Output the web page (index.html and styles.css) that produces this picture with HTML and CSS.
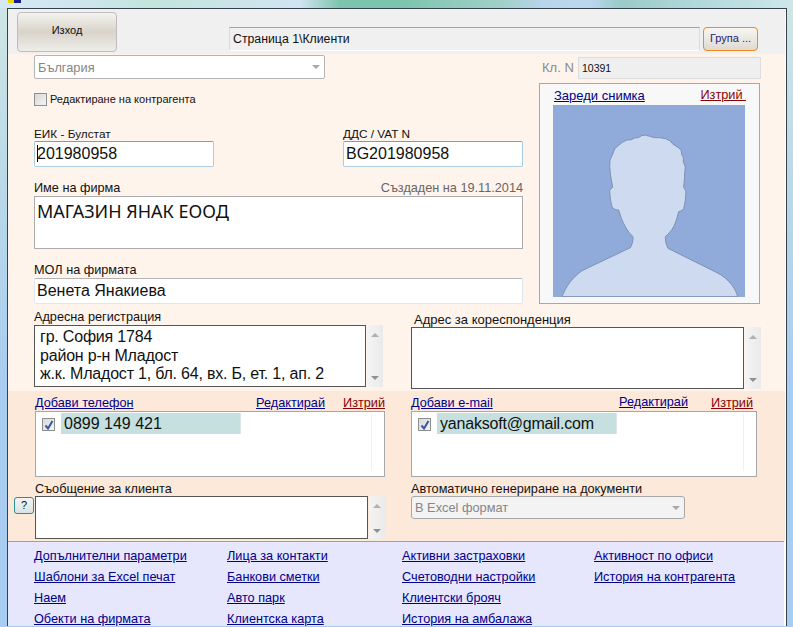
FILE: index.html
```html
<!DOCTYPE html>
<html lang="bg">
<head>
  <meta charset="UTF-8" />
  <meta name="viewport" content="width=device-width, initial-scale=1" />
  <title>Клиенти</title>
  <link rel="stylesheet" href="styles.css">
</head>
<body>
  <div class="titlebar">
    <svg class="app-icon" width="14" height="4" viewBox="0 0 14 4"><rect x="0" y="0" width="6" height="3" fill="#e8d800"/><rect x="6" y="0" width="7" height="3" fill="#1a1a90"/></svg>
  </div>

  <div class="window">
    <div class="toolbar">
      <div class="exit-btn">Изход</div>
      <div class="path-box">Страница 1\Клиенти</div>
      <div class="group-btn">Група ...</div>
    </div>

    <div class="main">
      <div class="main-top">
        <div class="left-col">
          <div class="select country">
            <span>България</span>
            <i class="arrow"></i>
          </div>
          <div class="check-row">
            <span class="checkbox"></span>
            <span>Редактиране на контрагента</span>
          </div>

          <div class="two-fields">
            <div class="short-field">
              <div class="label">ЕИК - Булстат</div>
              <div class="input"><span class="caret"></span>201980958</div>
            </div>
            <div class="short-field">
              <div class="label">ДДС / VAT N</div>
              <div class="input">BG201980958</div>
            </div>
          </div>

          <div class="label-row firm-label">
            <div class="label">Име на фирма</div>
            <div class="created">Създаден на 19.11.2014</div>
          </div>
          <div class="firm-box">МАГАЗИН ЯНАК ЕООД</div>

          <div class="label mol-label">МОЛ на фирмата</div>
          <div class="input mol">Венета Янакиева</div>
        </div>

        <div class="right-col">
          <div class="client-no">
            <span class="client-label">Кл. N</span>
            <div class="client-box">10391</div>
          </div>
          <div class="photo-box">
            <div class="photo-links">
              <a class="link">Зареди снимка</a>
              <a class="link red">Изтрий&nbsp;</a>
            </div>
            <svg class="photo" width="192" height="192" viewBox="0 0 576 576">
              <rect width="576" height="576" fill="#90abda"/>
              <path fill="#cddaf0" stroke="#7d91b6" stroke-width="3" stroke-linejoin="round" d="M277 90 L290 94 L305 98 L320 98 L338 101 L352 108 L358 116 L367 122 L373 126 L384 134 L386 148 L391 158 L391 170 L397 186 L395 205 L394 225 L392 247 L399 258 C398 280 396 296 392 310 C388 318 382 318 377 320 C372 340 368 352 362 365 C355 378 345 388 337 395 C337 410 340 420 345 430 L492 503 C510 512 525 525 537 540 C545 552 551 563 554 575 L27 575 C32 562 40 545 52 530 C62 518 75 505 87 497 L232 428 C238 418 241 405 240 395 C232 388 224 378 217 365 C208 350 202 332 197 315 C188 315 180 312 177 305 C173 290 170 270 170 255 L179 247 L175 225 L172 205 L170 185 L171 165 L178 150 L185 132 L195 122 L208 112 L222 105 L236 104 L244 99 L256 98 L266 92 Z"/>
            </svg>
          </div>
        </div>
      </div>

      <div class="addresses">
        <div class="address reg">
          <div class="label">Адресна регистрация</div>
          <div class="area-row">
            <div class="area">гр. София 1784<br>район р-н Младост<br>ж.к. Младост 1, бл. 64, вх. Б, ет. 1, ап. 2</div>
            <div class="scrollbar"><i class="up"></i><i class="down"></i></div>
          </div>
        </div>
        <div class="address corr">
          <div class="label">Адрес за кореспонденция</div>
          <div class="area-row">
            <div class="area"></div>
            <div class="scrollbar"><i class="up"></i><i class="down"></i></div>
          </div>
        </div>
      </div>
    </div>

    <div class="contacts">
      <div class="contact-col phones">
        <div class="contact-links">
          <a class="link">Добави телефон</a>
          <a class="link edit">Редактирай</a>
          <a class="link red">Изтрий</a>
        </div>
        <div class="list">
          <span class="checkbox checked"><svg width="10" height="10" viewBox="0 0 10 10"><path d="M1.5 5.5 L4 8.5 L8.5 1" fill="none" stroke="#3a54a8" stroke-width="2"/></svg></span>
          <div class="list-item">0899 149 421</div>
          <div class="list-rest"></div>
        </div>
        <div class="label msg-label">Съобщение за клиента</div>
        <div class="msg-row">
          <div class="help-btn">?</div>
          <div class="area msg"></div>
          <div class="scrollbar msg-scroll"><i class="up"></i><i class="down"></i></div>
        </div>
      </div>

      <div class="contact-col mails">
        <div class="contact-links">
          <a class="link">Добави e-mail</a>
          <a class="link edit">Редактирай</a>
          <a class="link red">Изтрий</a>
        </div>
        <div class="list">
          <span class="checkbox checked"><svg width="10" height="10" viewBox="0 0 10 10"><path d="M1.5 5.5 L4 8.5 L8.5 1" fill="none" stroke="#3a54a8" stroke-width="2"/></svg></span>
          <div class="list-item">yanaksoft@gmail.com</div>
          <div class="list-rest"></div>
        </div>
        <div class="label msg-label">Автоматично генериране на документи</div>
        <div class="select doc-select">
          <span>В Excel формат</span>
          <i class="arrow"></i>
        </div>
      </div>
    </div>

    <div class="footer">
      <a class="link">Допълнителни параметри</a>
      <a class="link">Лица за контакти</a>
      <a class="link">Активни застраховки</a>
      <a class="link">Активност по офиси</a>
      <a class="link">Шаблони за Excel печат</a>
      <a class="link">Банкови сметки</a>
      <a class="link">Счетоводни настройки</a>
      <a class="link">История на контрагента</a>
      <a class="link">Наем</a>
      <a class="link">Авто парк</a>
      <a class="link">Клиентски брояч</a>
      <span></span>
      <a class="link">Обекти на фирмата</a>
      <a class="link">Клиентска карта</a>
      <a class="link">История на амбалажа</a>
      <span></span>
    </div>
  </div>
</body>
</html>
```

FILE: styles.css
```css
html, body { height: 100%; }
body {
  margin: 0;
  height: 627px;
  overflow: hidden;
  font-family: "Liberation Sans", Arial, sans-serif;
  font-size: 12.7px;
  color: #111;
  background: linear-gradient(to bottom, #cfe6e4 0, #b8d8e8 200px, #a9cdf0 380px, #a8cdf2 627px);
}

.titlebar {
  height: 8px;
  position: relative;
  background: linear-gradient(to right, #d6e8f4 0, #cfe6f0 70px, #c4e4dc 150px, #d2e4f2 300px, #7cc4ac 340px, #7cc4ac 400px, #a0d0c8 500px, #b8d4ea 540px, #bcd6ee 590px, #9ccac8 620px, #b8dce0 720px, #cfe6ea 793px);
}
.app-icon { position: absolute; left: 8px; top: 0; }

.window {
  width: 777px;
  margin-left: 7px;
  border: 1px solid #34424e;
  border-bottom: 0;
  background: #fff;
  padding-right: 1px;
}

.toolbar {
  display: flex;
  align-items: flex-start;
  height: 45px;
  background: #f0f0f0;
}
.exit-btn {
  box-sizing: border-box;
  width: 100px;
  height: 40px;
  margin: 3px 0 0 9px;
  padding-bottom: 4px;
  border: 1px solid #bdbdbd;
  border-radius: 4px;
  background: linear-gradient(to bottom, #f5f3ef 0, #d8d4ca 50%, #efedea 100%);
  display: flex;
  align-items: center;
  justify-content: center;
  font-size: 11px;
}
.path-box {
  width: 466px;
  height: 22px;
  margin: 18px 0 0 112px;
  padding-left: 3px;
  border-top: 1px solid #a0a0a0;
  border-left: 1px solid #dcdcdc;
  border-right: 1px solid #dcdcdc;
  border-bottom: 1px solid #fff;
  line-height: 22px;
  font-size: 12.3px;
}
.group-btn {
  width: 53px;
  height: 22px;
  margin: 18px 0 0 3px;
  border: 1px solid #f08a1d;
  border-radius: 4px;
  background: linear-gradient(to bottom, #f8f6f2, #dedad2);
  text-align: center;
  line-height: 21px;
  font-size: 11px;
  color: #1c1c78;
}

.main {
  height: 337px;
  background: #fff4ec;
}
.main-top { display: flex; padding-left: 26px; }
.left-col { width: 489px; padding-top: 1px; }
.right-col { width: 222px; margin-left: 16px; }

.label { height: 14px; line-height: 14px; }

.select {
  display: flex;
  align-items: center;
  justify-content: space-between;
  box-sizing: border-box;
  border: 1px solid #b4b4b4;
  border-radius: 2px;
  background: #fff;
  color: #868686;
  padding: 0 4px 0 3px;
  font-size: 12.8px;
}
.country { width: 291px; height: 24px; }
.arrow {
  border-left: 4px solid transparent;
  border-right: 4px solid transparent;
  border-top: 4px solid #a8a8a8;
}

.check-row {
  display: flex;
  align-items: center;
  height: 14px;
  margin-top: 13px;
  gap: 3px;
  font-size: 11px;
}
.checkbox {
  display: flex;
  align-items: center;
  justify-content: center;
  box-sizing: border-box;
  width: 13px;
  height: 13px;
  flex: none;
  border: 1px solid #8e8f8f;
  background: linear-gradient(135deg, #d8d8d8, #f4f4f4);
}

.two-fields {
  display: flex;
  justify-content: space-between;
  margin-top: 21px;
}
.short-field { width: 180px; }
.short-field .label { font-size: 11.8px; }
.input {
  box-sizing: border-box;
  height: 26px;
  border: 1px solid #a9cde4;
  border-top-color: #7d9db5;
  border-radius: 2px;
  background: #fff;
  padding-left: 2px;
  line-height: 23px;
  font-size: 16px;
}
.caret {
  display: inline-block;
  width: 0;
  height: 17px;
  margin-right: -1px;
  border-left: 1px solid #000;
  vertical-align: -3px;
}

.label-row {
  display: flex;
  justify-content: space-between;
}
.firm-label { margin-top: 14px; }
.created { color: #666; }
.firm-box {
  box-sizing: border-box;
  height: 53px;
  margin-top: 1px;
  border: 1px solid #ababab;
  background: #fff;
  padding: 2px 2px;
  font-family: "Noto Sans", sans-serif;
  font-size: 18px;
  line-height: 24px;
}
.mol-label { margin-top: 14px; }
.mol {
  margin-top: 1px;
  border: 1px solid #e0e6ee;
  border-top-color: #b4b4b4;
}

.client-no {
  display: flex;
  align-items: center;
  height: 23px;
  margin-top: 2px;
  padding-left: 3px;
}
.client-label { width: 36px; font-size: 13px; color: #8a8a8a; }
.client-box {
  box-sizing: border-box;
  width: 183px;
  height: 22px;
  border: 1px solid #dcdcdc;
  background: #efefef;
  padding-left: 3px;
  line-height: 21px;
  font-size: 10.5px;
}
.photo-box {
  box-sizing: border-box;
  width: 221px;
  height: 221px;
  margin-top: 4px;
  border: 1px solid #a8a8a8;
  background: #f8f8f8;
  padding: 4px 0 0 13px;
}
.photo-links {
  display: flex;
  justify-content: space-between;
  width: 192px;
  height: 17px;
  padding-left: 1px;
  font-size: 13px;
}
.photo-links .red { font-size: 12.7px; }
.photo { display: block; }

.link { color: #00008b; text-decoration: underline; }
.link.red { color: #8b0000; }

.addresses { display: flex; padding: 6px 0 0 26px; }
.reg { width: 349px; }
.corr { margin-left: 28px; }
.corr .label { padding-left: 3px; margin-top: 3px; font-size: 13px; }
.corr .area-row { margin-top: 0; }
.area-row { display: flex; margin-top: 1px; }
.area {
  box-sizing: border-box;
  width: 333px;
  height: 62px;
  border: 1px solid #555;
  background: #fff;
  padding: 2px 5px;
  font-size: 16px;
  letter-spacing: -.2px;
  line-height: 18.5px;
}
.scrollbar {
  display: flex;
  flex-direction: column;
  justify-content: space-between;
  align-items: center;
  box-sizing: border-box;
  width: 16px;
  height: 62px;
  margin-left: 1px;
  padding: 8px 0 7px;
  background: linear-gradient(to right, #f4f4f4, #eaeaea);
}
.up {
  border-left: 4px solid transparent;
  border-right: 4px solid transparent;
  border-bottom: 4px solid #b0b0b0;
}
.down {
  border-left: 4px solid transparent;
  border-right: 4px solid transparent;
  border-top: 4px solid #909090;
}

.contacts {
  display: flex;
  height: 150px;
  box-sizing: border-box;
  padding: 5px 0 0 27px;
  background: #fde9da;
}
.contact-col { width: 350px; }
.mails { margin-left: 26px; width: 346px; }
.contact-links {
  display: flex;
  height: 15px;
  line-height: 15px;
}
.contact-links .edit { margin-left: auto; }
.contact-links .red { margin-left: 18px; }
.mails .contact-links .edit { margin-top: -1px; }
.mails .contact-links .red { margin-left: 23px; margin-right: 4px; }

.list {
  display: flex;
  box-sizing: border-box;
  height: 66px;
  border: 1px solid #a4a8ac;
  background: #fff;
  padding: 1px 0 0 6px;
  position: relative;
}
.list .checkbox { margin: 5px 6px 0 0; }
.list-item {
  width: 180px;
  height: 21px;
  background: #c5e0df;
  line-height: 21px;
  font-size: 16px;
  padding-left: 3px;
  box-sizing: border-box;
  border-right: 1px solid #dbe8e8;
}
.mails .list-item { letter-spacing: -.2px; }
.list-rest {
  flex: 1;
  height: 58px;
  margin-right: 12px;
  border-right: 1px solid #f0f0f0;
}

.msg-label { margin-top: 5px; }
.msg-row { display: flex; margin: 0 0 0 -21px; align-items: flex-start; }
.help-btn {
  box-sizing: border-box;
  width: 20px;
  height: 17px;
  margin: 1px 1px 0 0;
  border: 1px solid #2f8f8f;
  border-radius: 3px;
  background: linear-gradient(to bottom, #f4f4f4, #d8e4e4);
  text-align: center;
  line-height: 15px;
  font-size: 11px;
}
.msg { height: 43px; width: 333px; }
.msg-scroll { height: 43px; padding: 8px 0 6px; }

.doc-select {
  width: 274px;
  height: 23px;
  background: #f3f3f3;
  border-color: #a8a8a8;
  border-radius: 3px;
}

.footer {
  display: grid;
  grid-template-columns: 193px 175px 192px 1fr;
  grid-auto-rows: 20.9px;
  margin-right: 1px;
  padding: 6px 0 0 26px;
  height: 85px;
  box-sizing: border-box;
  border-top: 1px solid #a0a0a0;
  background: #e6e6fc;
  line-height: 16px;
}
```
